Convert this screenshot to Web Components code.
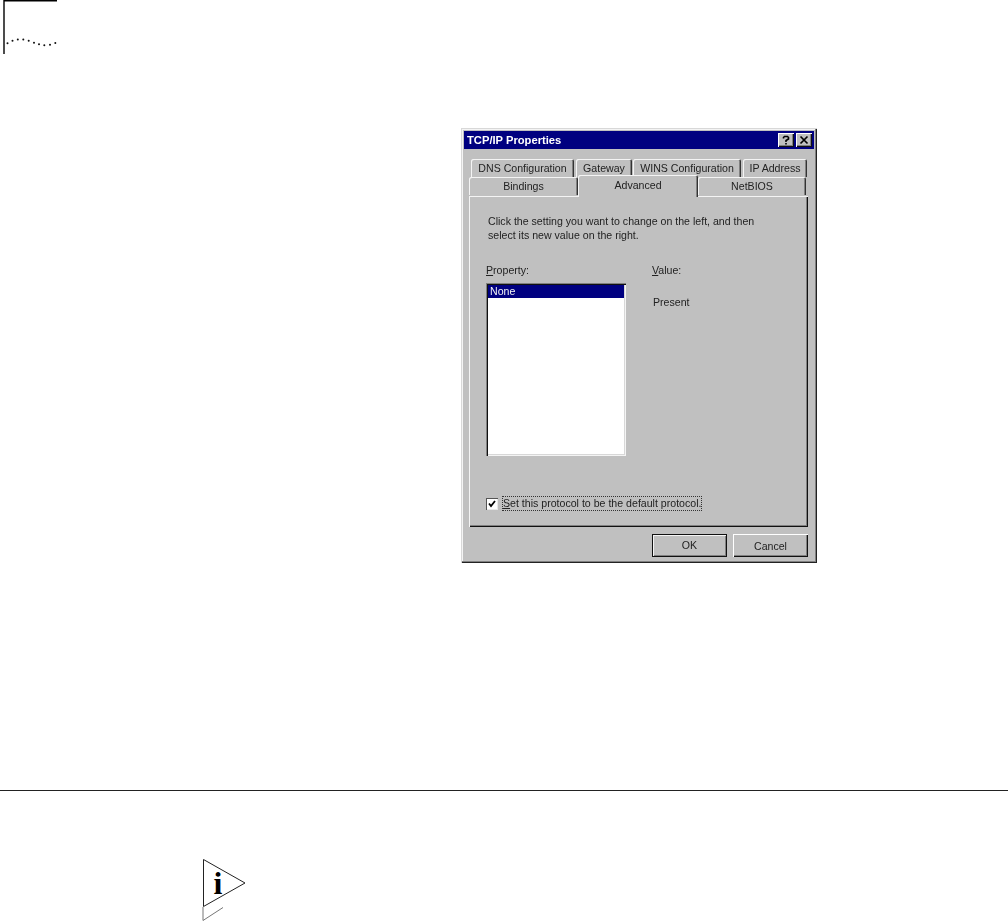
<!DOCTYPE html>
<html><head><meta charset="utf-8"><title>TCP/IP Properties</title>
<style>
html,body{margin:0;background:#fff}
body{width:1008px;height:923px;overflow:hidden;font-family:"Liberation Sans",Arial,sans-serif}
</style></head>
<body>
<print-page>
  <corner-mark></corner-mark>
  <win-dialog title-text="TCP/IP Properties"></win-dialog>
  <page-rule></page-rule>
  <note-icon></note-icon>
</print-page>
<script>
function el(name, css, html, init){
  customElements.define(name, class extends HTMLElement{
    constructor(){super();const r=this.attachShadow({mode:'open'});r.innerHTML='<style>'+css+'</style>'+html;if(init)init(this,r);}
  });
}
el('print-page',':host{display:flex;flex-direction:column;align-items:flex-start;width:1008px;height:923px}','<slot></slot>');
el('corner-mark',':host{display:block;width:60px;height:55px}svg{display:block}',
`<svg width="60" height="55" viewBox="0 0 60 55"><path d="M4 54V.7H57" fill="none" stroke="#000" stroke-width="1.4"/>
<g fill="#111">${[[7.5,43.3],[12.5,40.7],[17.8,39.4],[23.3,39.4],[28.7,40.7],[34,42.7],[39,44.3],[44.3,45.3],[50,44.7],[55.3,43]].map(p=>`<circle cx="${p[0]}" cy="${p[1]}" r="1"/>`).join('')}</g></svg>`);
el('page-rule',':host{display:block;width:1008px;height:1px;background:#222;margin-top:227px}','');
el('note-icon',':host{display:block;width:50px;height:64px;margin:68px 0 0 200px}svg{display:block}',
`<svg width="50" height="64" viewBox="200 860 50 64"><path d="M203.5 860.5V907.5L245 884Z" fill="#fff" stroke="#222" stroke-width="1"/>
<path d="M203 908V921.5L223 908.5" fill="none" stroke="#777" stroke-width="1"/>
<text x="218" y="895" text-anchor="middle" font-family="Liberation Serif" font-weight="700" font-size="32" fill="#000">i</text></svg>`);
el('win-tab',`:host{display:flex;align-items:center;justify-content:center;box-sizing:border-box;height:18px;background:#c0c0c0;border-radius:2px 2px 0 0;
  box-shadow:inset 1px 1px 0 #f4f4f4,inset -1px 0 0 #333,inset -2px 0 0 #808080;font-size:var(--fs);color:#222;white-space:nowrap;position:relative}
:host([selected]){height:22px;margin:-2px 0 -1px;z-index:1;padding-bottom:3px;box-shadow:inset 1px 1px 0 #f4f4f4,inset -1px 0 0 #333,inset -2px 0 0 #808080}`,'<slot></slot>');
el('win-button',`:host{display:flex;align-items:center;justify-content:center;box-sizing:border-box;width:75px;height:23px;background:#c0c0c0;font-size:var(--fs);color:#222;
  box-shadow:inset 1px 1px 0 #fff,inset -1px -1px 0 #111,inset -2px -2px 0 #808080}
:host([default]){box-shadow:inset 0 0 0 1px #111,inset 1px 1px 0 1px #f4f4f4,inset -2px -2px 0 #808080;padding-bottom:1px}`,'<slot></slot>');
el('win-dialog',`:host{--fs:10.6px;display:block;box-sizing:border-box;width:356px;height:437px;margin:73px 0 0 461px;padding:3px;background:#c0c0c0;color:#222;filter:blur(.35px);
  box-shadow:inset 1px 1px 0 #d8d8d8,inset -1px -1px 0 #222,inset -2px -2px 0 #808080,inset 2px 2px 0 #f4f4f4;font-size:var(--fs)}
.title{display:flex;align-items:center;justify-content:space-between;height:18px;background:#000080;color:#fff;font-weight:700;font-size:11.2px;padding:0 2px}
.title span{padding-left:1px}
.ctl{display:flex;gap:2px}
.cb{display:flex;align-items:center;justify-content:center;width:16px;height:14px;background:#c0c0c0;box-shadow:inset 1px 1px 0 #fff,inset -1px -1px 0 #111,inset -2px -2px 0 #808080}
.tabs{padding:10px 0 0 5px}
.row{display:flex}
.row.a{padding-left:2px}
.panel{box-sizing:border-box;width:339px;height:331px;margin-left:5px;padding:18px 19px 0;
  box-shadow:inset 1px 1px 0 #f4f4f4,inset -1px -1px 0 #111,inset -2px -2px 0 #808080}
.panel p{margin:0;line-height:14px;font-size:var(--fs);width:300px}
.cols{display:grid;grid-template-columns:166px 1fr;margin-top:22px;margin-left:-2px;line-height:13px}
u{text-decoration:underline}
.list{box-sizing:border-box;width:140px;height:173px;margin-top:6px;background:#fff;padding:2px;box-shadow:inset 1px 1px 0 #808080,inset 2px 2px 0 #111,inset -1px -1px 0 #f4f4f4,inset -2px -2px 0 #d8d8d8}
.sel{background:#000080;color:#f4f4f4;height:13px;line-height:13px;padding-left:2px}
.val{padding:19px 0 0 1px}
.check{display:flex;align-items:center;margin:40px 0 0 -2px;height:15px}
.box{box-sizing:border-box;width:12px;height:12px;background:#fff;box-shadow:inset 1px 1px 0 #555,inset -1px -1px 0 #e8e8e8}
.box svg{display:block}
.lab{margin-left:4px;padding:0 1px;height:15px;line-height:14px;outline:1px dotted #333;outline-offset:-1px;white-space:nowrap}
.foot{display:flex;justify-content:flex-end;gap:6px;margin-top:7px;padding-right:6px}`,
`<div class="title"><span id="t"></span><div class="ctl">
  <div class="cb"><svg width="10" height="10" viewBox="0 0 10 10"><path d="M2.5 3.5V2.5L3.5 1.5H6.5L7.5 2.5V4L5 5.5V7M5 8V9.500" fill="none" stroke="#000" stroke-width="1.6"/></svg></div>
  <div class="cb"><svg width="10" height="10" viewBox="0 0 10 10"><path d="M1.500 1.500L8.500 8.500M8.500 1.500L1.500 8.500" stroke="#000" stroke-width="1.700"/></svg></div>
</div></div>
<div class="tabs">
  <div class="row a"><win-tab style="width:103px">DNS Configuration</win-tab><win-tab style="width:56px;margin-left:2px">Gateway</win-tab><win-tab style="width:108px;margin-left:1px">WINS Configuration</win-tab><win-tab style="width:64px;margin-left:2px">IP Address</win-tab></div>
  <div class="row"><win-tab style="width:109px">Bindings</win-tab><win-tab selected style="width:120px">Advanced</win-tab><win-tab style="width:108px">NetBIOS</win-tab></div>
</div>
<div class="panel">
  <p>Click the setting you want to change on the left, and then<br>select its new value on the right.</p>
  <div class="cols">
    <div><div><u>P</u>roperty:</div><div class="list"><div class="sel">None</div></div></div>
    <div><div><u>V</u>alue:</div><div class="val">Present</div></div>
  </div>
  <div class="check"><div class="box"><svg width="12" height="12" viewBox="0 0 12 12"><path d="M3 5.500L5 8L9 3" fill="none" stroke="#000" stroke-width="1.800"/></svg></div><div class="lab"><u>S</u>et this protocol to be the default protocol.</div></div>
</div>
<div class="foot"><win-button default>OK</win-button><win-button>Cancel</win-button></div>`,
(h,r)=>{r.getElementById('t').textContent=h.getAttribute('title-text');});
</script>
</body></html>
